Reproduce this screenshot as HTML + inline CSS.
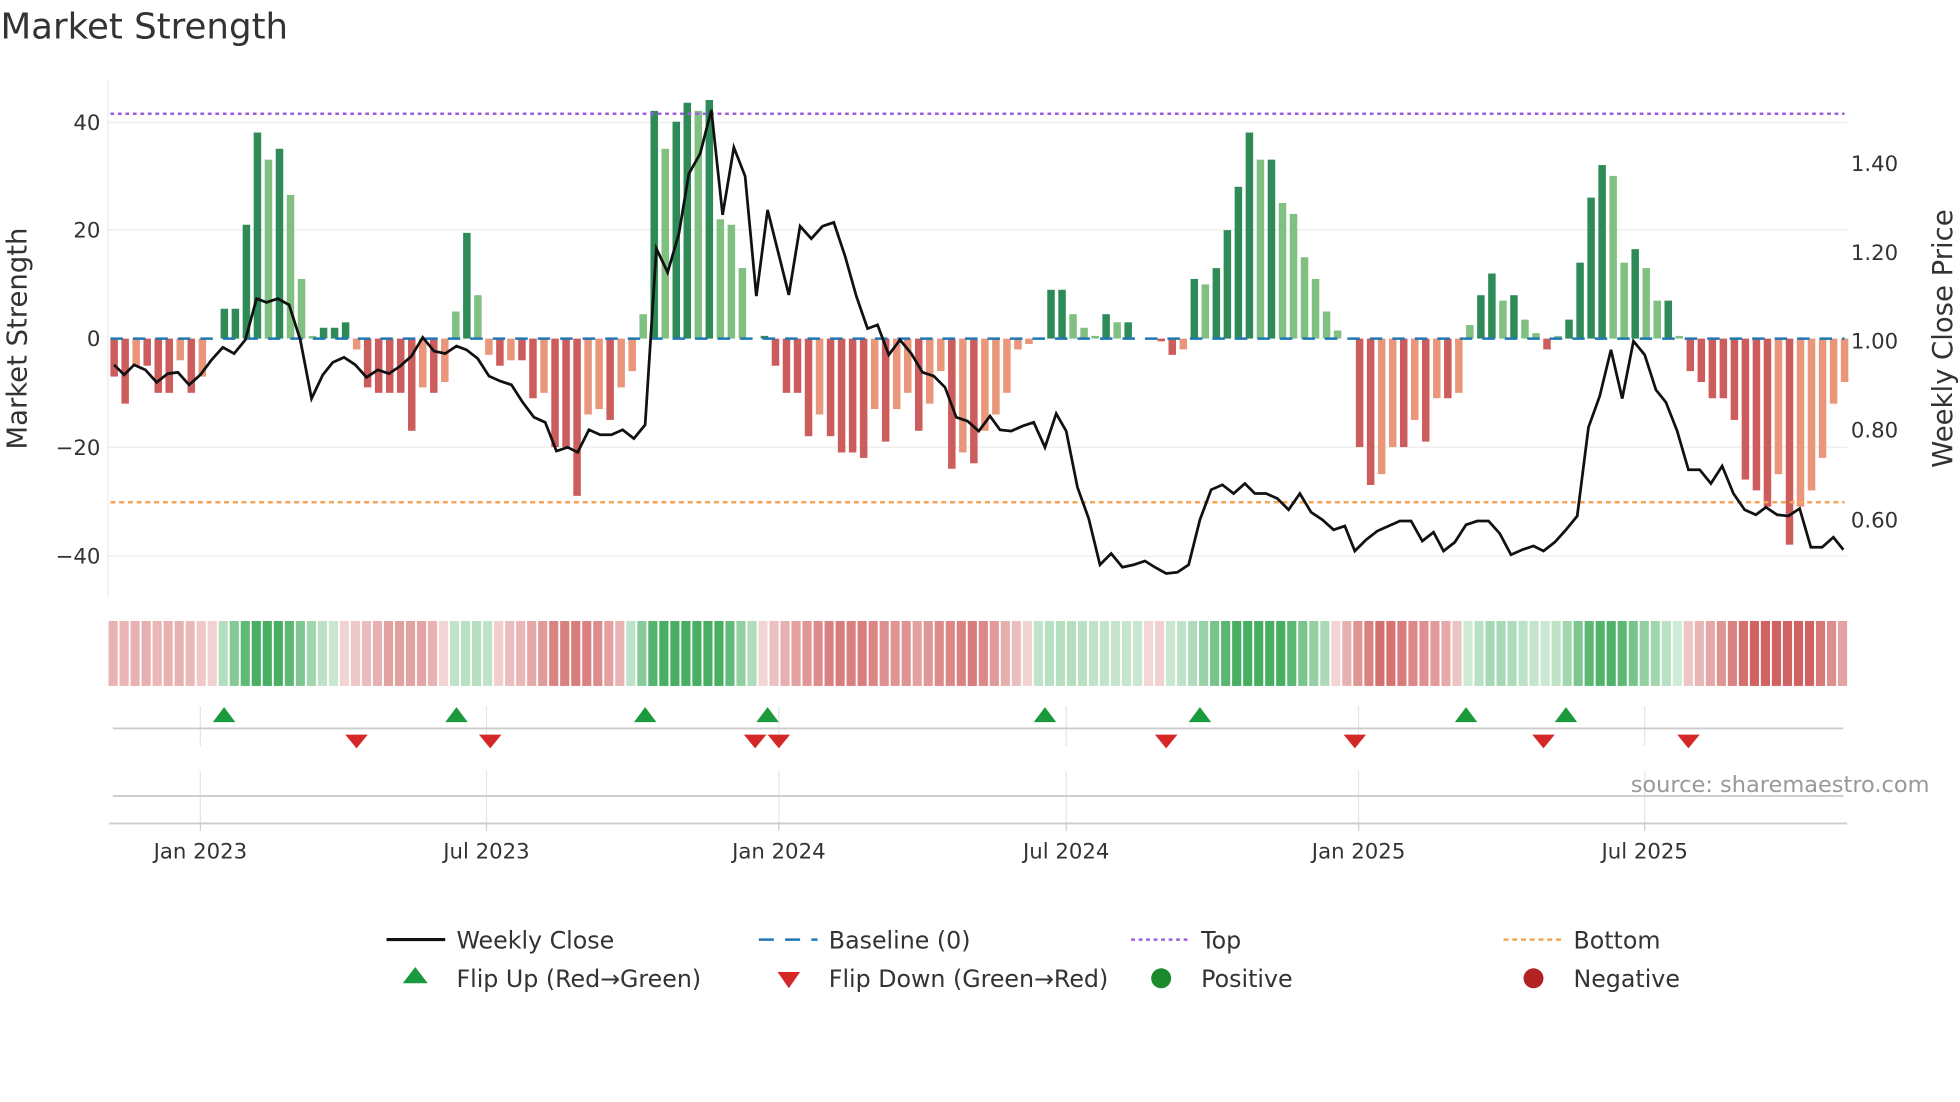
<!DOCTYPE html>
<html><head><meta charset="utf-8"><style>
html,body{margin:0;padding:0;background:#fff;width:1960px;height:1102px;overflow:hidden}
svg text{font-family:"DejaVu Sans","Liberation Sans",sans-serif;fill:#333}
</style></head><body>
<svg id="s" width="1960" height="1102" viewBox="0 0 1568 882" xmlns="http://www.w3.org/2000/svg">
<rect width="1568" height="882" fill="#fff"/>
<text x="0" y="31" font-size="28.5">Market Strength</text>
<g stroke="#ececec" stroke-width="1">
<line x1="86" x2="1478" y1="98" y2="98"/><line x1="86" x2="1478" y1="184" y2="184"/><line x1="86" x2="1478" y1="358" y2="358"/><line x1="86" x2="1478" y1="445" y2="445"/>
<line x1="86" x2="86" y1="65" y2="478"/>
</g>
<g font-size="17" text-anchor="end">
<text x="80" y="104">40</text><text x="80" y="190">20</text><text x="80" y="277">0</text><text x="80" y="364">−20</text><text x="80" y="451">−40</text>
</g>
<g font-size="17">
<text x="1481" y="137">1.40</text><text x="1481" y="208">1.20</text><text x="1481" y="279">1.00</text><text x="1481" y="350">0.80</text><text x="1481" y="422">0.60</text>
</g>
<text transform="translate(21,271) rotate(-90)" font-size="22" text-anchor="middle">Market Strength</text>
<text transform="translate(1562,271) rotate(-90)" font-size="22" text-anchor="middle">Weekly Close Price</text>
<g id="bars"></g>
<line x1="88" x2="1476" y1="271" y2="271" stroke="#1f77b4" stroke-width="2" stroke-dasharray="10,8"/>
<line x1="88" x2="1476" y1="91" y2="91" stroke="#9b5fe0" stroke-width="2" stroke-dasharray="3,3"/>
<line x1="88" x2="1476" y1="402" y2="402" stroke="#f4a45a" stroke-width="2" stroke-dasharray="4,3"/>
<polyline id="price" fill="none" stroke="#111" stroke-width="2.2"/>
<g id="strip"></g>
<g stroke="#e6e6e6"><line x1="160" x2="160" y1="565" y2="597"/><line x1="389" x2="389" y1="565" y2="597"/><line x1="623" x2="623" y1="565" y2="597"/><line x1="853" x2="853" y1="565" y2="597"/><line x1="1087" x2="1087" y1="565" y2="597"/><line x1="1316" x2="1316" y1="565" y2="597"/>
<line x1="160" x2="160" y1="617" y2="659"/><line x1="389" x2="389" y1="617" y2="659"/><line x1="623" x2="623" y1="617" y2="659"/><line x1="853" x2="853" y1="617" y2="659"/><line x1="1087" x2="1087" y1="617" y2="659"/><line x1="1316" x2="1316" y1="617" y2="659"/></g>
<line x1="90" x2="1475" y1="583" y2="583" stroke="#ccc" stroke-width="1.5"/>
<line x1="90" x2="1475" y1="637" y2="637" stroke="#ccc" stroke-width="1.5"/>
<g id="tri"></g>
<text x="1544" y="634" font-size="18" text-anchor="end" fill="#999" style="fill:#999">source: sharemaestro.com</text>
<line x1="87" x2="1478" y1="659" y2="659" stroke="#ccc" stroke-width="1.5"/>
<g stroke="#ccc"><line x1="160" x2="160" y1="659" y2="665"/><line x1="389" x2="389" y1="659" y2="665"/><line x1="623" x2="623" y1="659" y2="665"/><line x1="853" x2="853" y1="659" y2="665"/><line x1="1087" x2="1087" y1="659" y2="665"/><line x1="1316" x2="1316" y1="659" y2="665"/></g>
<g font-size="17" text-anchor="middle">
<text x="160" y="687">Jan 2023</text><text x="389" y="687">Jul 2023</text><text x="623" y="687">Jan 2024</text><text x="853" y="687">Jul 2024</text><text x="1087" y="687">Jan 2025</text><text x="1316" y="687">Jul 2025</text>
</g>
<g font-size="19">
<line x1="309" x2="356" y1="752" y2="752" stroke="#111" stroke-width="2.5"/><text x="365" y="759">Weekly Close</text>
<line x1="607" x2="654" y1="752" y2="752" stroke="#1f77b4" stroke-width="2" stroke-dasharray="12,9"/><text x="663" y="759">Baseline (0)</text>
<line x1="905" x2="952" y1="752" y2="752" stroke="#9b5fe0" stroke-width="2" stroke-dasharray="3,3"/><text x="961" y="759">Top</text>
<line x1="1203" x2="1250" y1="752" y2="752" stroke="#f4a45a" stroke-width="2" stroke-dasharray="4,3"/><text x="1259" y="759">Bottom</text>
<polygon points="332,774 342,787 322,787" fill="#1a9a3c"/><text x="365" y="790">Flip Up (Red→Green)</text>
<polygon points="622,778 640,778 631,791" fill="#d62728"/><text x="663" y="790">Flip Down (Green→Red)</text>
<circle cx="929" cy="783" r="8" fill="#1a8a2c"/><text x="961" y="790">Positive</text>
<circle cx="1227" cy="783" r="8" fill="#b22222"/><text x="1259" y="790">Negative</text>
</g>
</svg>
<script>
(function(){
var v=[-7,-12,-5,-5,-10,-10,-4,-10,-7,0,5.5,5.5,21,38,33,35,26.5,11,0.5,2,2,3,-2,-9,-10,-10,-10,-17,-9,-10,-8,5,19.5,8,-3,-5,-4,-4,-11,-10,-20,-20,-29,-14,-13,-15,-9,-6,4.5,42,35,40,43.5,42,44,22,21,13,0,0.5,-5,-10,-10,-18,-14,-18,-21,-21,-22,-13,-19,-13,-10,-17,-12,-6,-24,-21,-23,-17,-14,-10,-2,-1,0,9,9,4.5,2,0.5,4.5,3,3,0,0,-0.5,-3,-2,11,10,13,20,28,38,33,33,25,23,15,11,5,1.5,0,-20,-27,-25,-20,-20,-15,-19,-11,-11,-10,2.5,8,12,7,8,3.5,1,-2,0.5,3.5,14,26,32,30,14,16.5,13,7,7,0.5,-6,-8,-11,-11,-15,-26,-28,-31,-25,-38,-31,-28,-22,-12,-8];
var n=v.length,dx=(1476-91)/(n-1),h="";
for(var i=0;i<n;i++){var x=91+dx*i,y=v[i],pv=i?Math.abs(v[i-1]):0,dark=Math.abs(y)>=pv;
var c=y>=0?(dark?"#2e8b57":"#80c080"):(dark?"#cd5c5c":"#e9967a");
var yt=271-Math.max(y,0)*4.34,hh=Math.abs(y)*4.34;
h+='<rect x="'+(x-3)+'" y="'+yt+'" width="6" height="'+hh+'" fill="'+c+'"/>';}
document.getElementById("bars").innerHTML=h;
var sh="";var sw=(1479-86)/n;
for(var i=0;i<n;i++){var s=0;for(var k=-2;k<=2;k++){var j=Math.min(n-1,Math.max(0,i+k));s+=v[j];}s/=5;
var a=Math.min(0.85,0.22+Math.abs(s)/40);var c=s>=0?"rgba(40,160,70,"+a+")":"rgba(200,70,70,"+a+")";
sh+='<rect x="'+(86+sw*i+0.5)+'" y="497" width="'+(sw-1.5)+'" height="52" fill="'+c+'"/>';}
document.getElementById("strip").innerHTML=sh;
var p=[[91,292],[99,300],[107,292],[116,296],[125,306],[134,299],[142,298],[151,308],[160,300],[169,288],[178,278],[187,283],[196,272],[205,239],[213,242],[222,239],[231,244],[240,272],[249,319],[258,300],[266,290],[275,286],[284,292],[293,302],[302,296],[311,299],[320,293],[329,285],[338,270],[347,281],[356,283],[365,277],[373,280],[382,287],[391,301],[400,305],[409,308],[418,322],[427,334],[436,338],[445,361],[454,358],[462,362],[471,344],[480,348],[489,348],[498,344],[507,351],[516,340],[525,199],[534,218],[543,187],[551,139],[560,123],[569,88],[578,172],[587,118],[596,141],[605,237],[614,168],[622,200],[631,236],[640,181],[649,191],[658,181],[667,178],[676,205],[685,237],[694,263],[702,260],[711,284],[720,272],[729,283],[738,298],[747,301],[756,310],[765,334],[774,337],[783,345],[792,333],[800,344],[809,345],[818,341],[827,338],[836,358],[845,331],[853,345],[862,390],[871,415],[880,452],[889,443],[898,454],[907,452],[916,449],[924,454],[933,459],[942,458],[951,452],[960,416],[969,392],[978,388],[987,395],[996,387],[1004,395],[1013,395],[1022,399],[1031,408],[1040,395],[1049,410],[1058,416],[1067,424],[1076,421],[1084,441],[1093,432],[1102,425],[1111,421],[1120,417],[1129,417],[1138,433],[1147,426],[1155,441],[1164,434],[1173,420],[1182,417],[1191,417],[1200,427],[1209,444],[1218,440],[1227,437],[1235,441],[1244,434],[1253,424],[1262,413],[1271,342],[1280,317],[1289,280],[1298,319],[1307,273],[1316,284],[1325,312],[1333,322],[1342,345],[1351,376],[1360,376],[1369,387],[1378,373],[1387,395],[1396,408],[1405,412],[1413,406],[1422,412],[1431,413],[1440,407],[1449,438],[1458,438],[1467,430],[1475,440]];
document.getElementById("price").setAttribute("points",p.map(function(q){return q.join(",")}).join(" "));
var t="";[179,365,516,614,836,960,1173,1253].forEach(function(x){t+='<polygon points="'+x+',566 '+(x+9)+',578 '+(x-9)+',578" fill="#1a9a3c"/>';});
[285,392,604,623,933,1084,1235,1351].forEach(function(x){t+='<polygon points="'+(x-9)+',588 '+(x+9)+',588 '+x+',599" fill="#d62728"/>';});
document.getElementById("tri").innerHTML=t;
})();
</script>
</body></html>
